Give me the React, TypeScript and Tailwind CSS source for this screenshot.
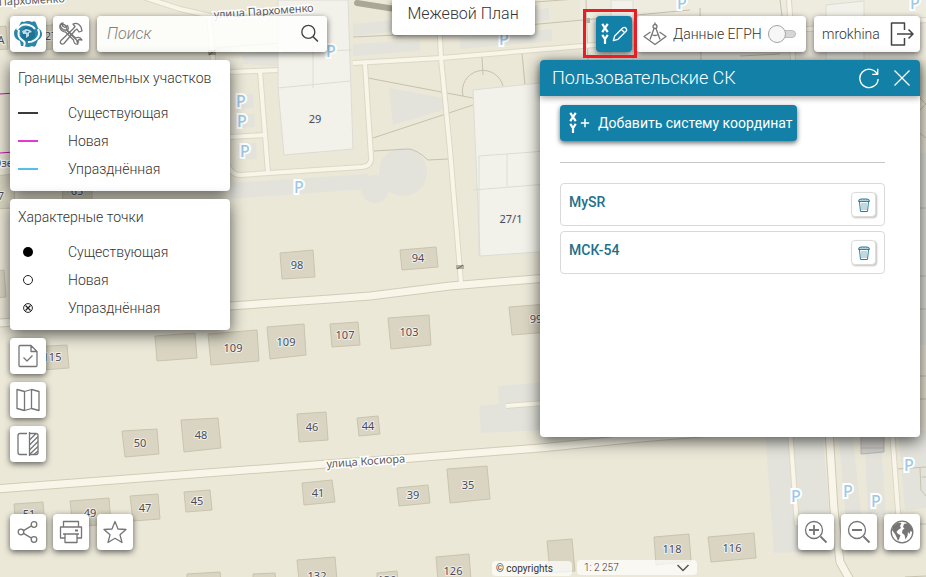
import { useState } from 'react'
import type { ReactNode } from 'react'

type Building = { points: string; label?: string; x?: number; y?: number }

const buildings: Building[] = [
  { points: '280,253 313,250 315,277 282,279', label: '98', x: 297, y: 269 },
  { points: '400,250 436,247 438,267 402,270', label: '94', x: 418, y: 262 },
  { points: '155,336 195,333 197,358 157,361' },
  { points: '208,334 257,330 259,361 211,365', label: '109', x: 233, y: 352 },
  { points: '267,327 304,324 306,355 270,359', label: '109', x: 286, y: 346 },
  { points: '330,324 358,322 360,345 332,347', label: '107', x: 345, y: 339 },
  { points: '388,318 429,315 431,345 391,349', label: '103', x: 409, y: 336 },
  { points: '509,307 560,303 562,331 512,335', label: '99', x: 536, y: 323 },
  { points: '30,347 67,345 69,368 30,371', label: '115', x: 52, y: 361 },
  { points: '122,431 157,429 159,454 125,457', label: '50', x: 140, y: 447 },
  { points: '181,420 218,418 221,448 184,452', label: '48', x: 201, y: 439 },
  { points: '297,414 326,412 328,440 299,442', label: '46', x: 312, y: 431 },
  { points: '357,418 378,416 380,434 359,436', label: '44', x: 368, y: 430 },
  { points: '14,504 43,502 45,528 16,530', label: '51', x: 29, y: 518 },
  { points: '70,501 109,498 111,524 73,527', label: '49', x: 90, y: 517 },
  { points: '130,496 158,494 160,519 133,521', label: '47', x: 145, y: 512 },
  { points: '184,492 210,490 212,510 186,512', label: '45', x: 197, y: 505 },
  { points: '302,483 332,480 335,502 304,505', label: '41', x: 318, y: 497 },
  { points: '397,488 428,485 430,503 399,506', label: '39', x: 413, y: 499 },
  { points: '447,469 487,466 490,499 450,503', label: '35', x: 468, y: 489 },
  { points: '187,574 220,572 221,580 187,580' },
  { points: '253,574 275,573 276,580 253,580' },
  { points: '297,560 335,557 337,580 299,580', label: '132', x: 317, y: 580 },
  { points: '377,573 397,571 398,580 377,580', label: '130', x: 387, y: 584 },
  { points: '436,557 469,554 471,580 438,580', label: '126', x: 453, y: 575 },
  { points: '547,541 572,539 575,571 550,573' },
  { points: '654,537 689,534 691,561 656,565', label: '118', x: 672, y: 553 },
  { points: '708,537 754,533 756,558 711,562', label: '116', x: 732, y: 552 },
  { points: '-5,27 6,26 8,49 -5,50', label: 'A', x: 1, y: 44 },
  { points: '40,26 64,24 66,48 42,50', label: '27', x: 51, y: 40 },
  { points: '-5,176 14,174 15,208 -5,209', label: '7', x: 1, y: 200 },
  { points: '62,170 92,168 92,210 63,210', label: '65', x: 77, y: 195 },
  { points: '-5,271 4,270 6,297 -5,298' },
]

const wideRoads = [
  'M0 323 L230 306 L330 299 L370 296 L410 291 L450 286 L560 277',
  'M-5 489 L340 463 L400 459 L540 448 L640 438 L760 428',
  'M829 430 L834 510 L840 562 L850 580',
]

const narrowRoads = [
  'M438 0 L441 58 L450 150 L461 283',
  'M230 72 L280 70',
  'M353 63 L441 58 L583 46 L926 20',
  'M260 71 L268 173',
  'M230 137 L265 135',
  'M226 160 Q230 175 240 175 L362 167 Q372 166 371 157 L365 64',
  'M140 -4 L180 9 L211 16 L280 10',
  'M209 16 L213 60',
  'M789 0 L793 60',
  'M790 430 L797 525',
  'M892 430 L899 525',
  'M506 406 L545 403',
]

const paths = [
  'M368 78 L473 98',
  'M373 138 L473 105',
  'M374 151 L408 149 Q416 149 428 160 L448 159',
  'M463 96 A20 20 0 0 1 503 86',
  'M482 57 L483 75',
  'M522 53 L525 85',
  'M353 37 L440 33 L583 20 L690 10',
  'M213 48 L280 43',
  'M535 2 L590 -2',
  'M897 469 L926 467 M920 468 L921 490 L926 496 M922 477 L926 477',
  'M586 0 L588 60 M700 8 L701 60 M740 56 L780 54 M780 0 L782 16',
  'M912 90 L926 104 L918 112 M918 132 L926 138',
  'M916 208 H926 M916 276 H926 M916 309 H926 M916 376 H926 M916 399 H926',
  'M898 524 H926 M905 577 L926 576',
]

const parkings = [
  [331, 57], [241, 107], [242, 127], [245, 157], [299, 193], [504, 45],
  [682, 9], [915, 9], [796, 502], [848, 497], [876, 507], [909, 471],
]

function CityMap() {
  return (
    <svg
      className="absolute inset-0 h-full w-full bg-[#ebe8d8]"
      viewBox="0 0 926 577"
      preserveAspectRatio="xMinYMin slice"
      fontFamily="'Noto Sans', 'Open Sans', sans-serif"
      fontSize="11"
      textAnchor="middle"
      aria-hidden="true"
    >
      <path d="M580 0 H926 V60 H580Z" fill="#eeebdf" />
      <g fill="#e3e3dc">
        <path d="M389 88 L443 98 V110 L393 125Z" />
        <circle cx="403" cy="172" r="24" />
        <circle cx="375" cy="189" r="14" />
        <path d="M230 183 L368 174 V189 L230 199Z" />
        <path d="M353 24 L391 20 V32 L353 36Z M353 44 L420 40 V51 L353 56Z M460 38 L552 29 V41 L460 49Z M490 15 L549 8 V20 L490 26Z" />
        <path d="M235 95 L253 94 L254 108 L235 109Z M235 115 L254 114 L255 127 L236 128Z M238 144 L256 143 L257 159 L239 160Z" />
        <path d="M242 55 L278 50 V66 L243 64Z" />
        <path d="M498 386 L550 382 V430 L481 433 L479 406 L499 404Z" />
        <path d="M765 430 H822 L833 551 L774 553Z M838 430 H852 L862 520 H846Z M864 430 H880 L886 515 H868Z M898 430 H926 V508 L905 510Z" />
        <path d="M914 153 H926 V345 H914Z" />
      </g>
      <g fill="none" stroke="#c6c2ad" strokeWidth="1">
        {paths.map((d) => <path key={d} d={d} />)}
      </g>
      <g fill="none" strokeLinejoin="round">
        {narrowRoads.map((d) => <path key={d} d={d} stroke="#dcd8c6" strokeWidth="6" />)}
        {wideRoads.map((d) => <path key={d} d={d} stroke="#d0ccb7" strokeWidth="9" />)}
        {narrowRoads.map((d) => <path key={d} d={d} stroke="#f9f6e9" strokeWidth="4" />)}
        {wideRoads.map((d) => <path key={d} d={d} stroke="#f9f6e9" strokeWidth="7" />)}
        <path d="M357 3 L395 9" stroke="#aaa894" strokeWidth="6" strokeLinecap="round" />
        <path d="M0 94 L14 93 M0 153 L14 152" stroke="#c217b0" />
      </g>

      <g fill="#f3f2ea" stroke="#dcdcd6">
        <path d="M278 0 H348 L353 149 L284 155 L278 88Z" />
        <path d="M278 88 L350 81 M313 88 V40 M283 52 L352 50" fill="none" />
        <path d="M473 90 L540 83 L640 75 V245 L480 256Z" />
        <path d="M479 156 L560 150 M507 154 V186 M473 190 L560 183 M479 156 V256" fill="none" />
        <path d="M611 0 H633 V60 H611Z M826 5 L864 1 V60 H826Z" />
      </g>

      <g stroke="#c8c4ae" fill="#d9d5c2">
        {buildings.map((b) => <polygon key={b.points} points={b.points} />)}
        <path d="M861 430 H884 V452 L861 454Z M861 448 H884" fill="#cfceca" stroke="#b5b5b3" />
      </g>
      <path d="M208 50 h8 v5 h-8z M456 265 h8 v4 h-8z M583 18 h7 v5 h-7z" fill="#b3b09e" />
      <path d="M209 55 l6 -5 M457 269 l6 -4" stroke="#66645a" />

      <g fill="#4a4c5c" stroke="#f1efe6" strokeWidth="2" paintOrder="stroke">
        {buildings.map((b) => b.label && <text key={b.points} x={b.x} y={b.y}>{b.label}</text>)}
        <text x="315" y="123">29</text>
        <text x="511" y="223">27/1</text>
      </g>
      <g fill="#5c5a5a" stroke="#ffffff" strokeWidth="3" paintOrder="stroke">
        <text x="264" y="15" transform="rotate(-4 264 15)">улица Пархоменко</text>
        <text x="32" y="4" transform="rotate(-3 32 4)">Пархоменко</text>
        <text x="366" y="465" transform="rotate(-4 366 465)">улица Косиора</text>
        <text x="3" y="167">Озе</text>
      </g>
      <g fill="#9dcae6" stroke="#ffffff" strokeWidth="4" paintOrder="stroke" fontSize="16" fontWeight="500">
        {parkings.map(([x, y]) => <text key={`${x}-${y}`} x={x} y={y}>P</text>)}
      </g>
    </svg>
  )
}

function Icon({ children, className = 'size-6' }: { children: ReactNode; className?: string }) {
  return (
    <svg
      viewBox="0 0 24 24"
      className={className}
      fill="none"
      stroke="currentColor"
      strokeWidth="1.3"
      strokeLinejoin="round"
      aria-hidden="true"
    >
      {children}
    </svg>
  )
}

function MapButton({ label, children }: { label: string; children: ReactNode }) {
  return (
    <button
      type="button"
      aria-label={label}
      className="flex size-9 shrink-0 items-center justify-center rounded bg-white text-[#757575] shadow-[0_2px_6px_rgba(0,0,0,0.6)]"
    >
      {children}
    </button>
  )
}

function AxesMark({ className }: { className: string }) {
  return (
    <svg viewBox="0 0 10 24" className={className} fill="none" stroke="currentColor" strokeWidth="2.4" aria-hidden="true">
      <path d="M2 1 L8 10 M8 1 L2 10" />
      <path d="M2 13 L5 17.5 L8 13 M5 17 V23" />
    </svg>
  )
}

function Logo() {
  return (
    <svg viewBox="0 0 28 28" className="size-7" aria-hidden="true">
      <path
        d="M7 2 Q8 1 10 2 Q14 0 18 2 Q21 0 22 3 L24 8 Q28 10 28 14 Q28 18 24 20 L22 25 Q21 28 18 26 Q14 28 10 26 L7 26 L6 21 Q0 19 0 13 Q0 9 4 8Z"
        fill="#2a87a9"
      />
      <g fill="none" stroke="#ffffff" strokeWidth="2">
        <path d="M3 10 Q7 3 15 5 Q19 6 21 9" />
        <path d="M24 9 Q27 16 21 20 Q18 22 14 22" />
        <path d="M10 26 Q12 22 8 20 Q3 17 5 10" />
      </g>
      <circle cx="14" cy="14" r="7" fill="#1c7395" />
      <path d="M8 11 L12 9 L16 10 L18 12 L15 13 L15 16 L12 18 L12 14 L9 14Z" fill="#b9dbe6" />
      <path d="M12 11 L15 11 L13 13Z" fill="#1c7395" />
    </svg>
  )
}

type LegendRow = { label: string; symbol: ReactNode }

function LegendCard({ title, rows }: { title: string; rows: LegendRow[] }) {
  return (
    <section className="w-[220px] rounded bg-white px-2 py-2 text-[#333] shadow-[0_4px_16px_rgba(0,0,0,0.65)]">
      <h2 className="mb-[11px] text-sm leading-5 font-light">{title}</h2>
      <ul>
        {rows.map((row) => (
          <li key={row.label} className="flex h-7 items-center">
            <span className="flex w-[50px] items-center">{row.symbol}</span>
            <span className="text-sm leading-5 font-light">{row.label}</span>
          </li>
        ))}
      </ul>
    </section>
  )
}

const borderRows: LegendRow[] = [
  { label: 'Существующая', symbol: <i className="h-0.5 w-5 bg-[#3a3a3a]" /> },
  { label: 'Новая', symbol: <i className="h-0.5 w-5 bg-[#e23bd3]" /> },
  { label: 'Упразднённая', symbol: <i className="h-0.5 w-5 bg-[#55bfea]" /> },
]

const pointRows: LegendRow[] = [
  { label: 'Существующая', symbol: <i className="ml-[5px] size-2.5 rounded-full bg-black" /> },
  { label: 'Новая', symbol: <i className="ml-[5px] size-2.5 rounded-full border border-[#222]" /> },
  {
    label: 'Упразднённая',
    symbol: (
      <svg viewBox="0 0 10 10" className="ml-[5px] size-2.5" fill="none" stroke="#222" aria-hidden="true">
        <circle cx="5" cy="5" r="4.4" />
        <path d="M2.5 2.5 L7.5 7.5 M7.5 2.5 L2.5 7.5" strokeWidth="1.3" />
      </svg>
    ),
  },
]

function Header() {
  const [query, setQuery] = useState('')
  const [egrn, setEgrn] = useState(false)

  return (
    <header className="grid grid-cols-[1fr_auto_1fr] items-start text-[#333]">
      <div className="flex gap-[7px] pt-4 pl-2.5">
        <MapButton label="Главная"><Logo /></MapButton>
        <MapButton label="Инструменты">
          <Icon>
            <path d="M2 2 L6 3 L8 6 L7.5 8 L20 20.5 M2 2 L1.5 5 L4.5 8 L7 8" />
            <path d="M1 6 Q0 2 4 1 L3.5 4 L6 5.5 L8.5 3.5 Q10 6 8.5 8.5 L16.5 16 Q21 14 23 18 L20 17.5 L18 19.5 L19 22 Q15 23 14.5 18 L6.5 10 Q3 10 1 6Z" />
            <path d="M14 2 Q19 0 22 5 L23 9 L20 10 L18 7 L16 8.5 L5 21.5 Q3 23 1.5 21 Q1 20 2 18.5 L14 7 L16 4.5Z" />
          </Icon>
        </MapButton>
        <form
          role="search"
          onSubmit={(event) => event.preventDefault()}
          className="ml-px flex h-9 w-[230px] items-center rounded bg-white/85 pr-[7px] pl-2.5 shadow-[0_2px_6px_rgba(0,0,0,0.6)]"
        >
          <input
            type="text"
            aria-label="Поиск"
            placeholder="Поиск"
            value={query}
            onChange={(event) => setQuery(event.target.value)}
            className="min-w-0 flex-1 bg-transparent text-base font-light outline-none placeholder:text-[#808080] placeholder:italic"
          />
          <button type="submit" aria-label="Найти" className="text-[#444]">
            <Icon className="size-5">
              <circle cx="10" cy="9.5" r="7.8" strokeWidth="1.6" />
              <path d="M15.5 15 L21.500 21" strokeWidth="2" />
            </Icon>
          </button>
        </form>
      </div>

      <h1 className="flex h-[35px] w-[143px] justify-center rounded-b bg-white pt-0.5 text-base leading-6 font-light shadow-[0_2px_6px_rgba(0,0,0,0.6)]">
        Межевой План
      </h1>

      <div className="flex justify-end gap-2 pt-4 pr-1.5">
        <div className="flex gap-1">
          <div className="relative">
            <button
              type="button"
              aria-label="Пользовательские СК"
              className="flex size-9 items-center justify-center gap-0.5 rounded bg-[#1381a7] text-white shadow-[0_2px_6px_rgba(0,0,0,0.6)]"
            >
              <AxesMark className="h-[22px] w-2.5" />
              <Icon className="size-4">
                <path d="M2 22 L4 15 L16 3 Q18.500 1 21 3.500 Q23 6 21 8 L9 20Z M14 5 L19 10" strokeWidth="2" />
              </Icon>
            </button>
            <span className="pointer-events-none absolute -top-[7px] -right-[5px] -bottom-[6px] -left-[13px] border-3 border-[#ec1c24]" />
          </div>
          <label className="flex h-9 w-[170px] items-center rounded bg-white pr-2.5 pl-[7px] text-sm font-light shadow-[0_2px_6px_rgba(0,0,0,0.6)]">
            <Icon className="mr-1.5 size-6 text-[#757575]">
              <circle cx="12" cy="4.5" r="2" />
              <path d="M12 0.500 V2.500 M11 6.500 L7 17.500 M13 6.500 L17 17.500 M8.500 12.500 Q12 14.500 15.500 12.500" />
              <path d="M7.500 10 L1 14.500 L12 22.500 L23 14.500 L16.500 10" />
            </Icon>
            <span className="flex-1 whitespace-nowrap">Данные ЕГРН</span>
            <input
              type="checkbox"
              checked={egrn}
              onChange={(event) => setEgrn(event.target.checked)}
              className="relative h-2 w-7 appearance-none rounded-full border border-[#bdbdbd] bg-[#d6d6d6] before:absolute before:-top-1.5 before:-left-px before:size-[18px] before:rounded-full before:border before:border-[#a5a5a5] before:bg-[#f7f7f7] checked:before:left-2.5"
            />
          </label>
        </div>
        <button
          type="button"
          className="flex h-9 w-[106px] items-center justify-between rounded bg-white pr-1.5 pl-2 text-sm font-light shadow-[0_2px_6px_rgba(0,0,0,0.6)]"
        >
          mrokhina
          <Icon className="size-6 text-[#444]">
            <path d="M14.500 8 V1 H1.500 V23 H14.500 V16" strokeWidth="1.5" />
            <path d="M7 12 H23 M18.500 7.500 L23 12 L18.500 16.500" strokeWidth="1.5" />
          </Icon>
        </button>
      </div>
    </header>
  )
}

function CoordinateSystemsPanel() {
  const [systems, setSystems] = useState(['MySR', 'МСК-54'])

  return (
    <section className="min-h-[377px] w-[380px] self-start rounded bg-white shadow-[0_4px_16px_rgba(0,0,0,0.65)]">
      <div className="flex h-9 items-center rounded-t bg-[#1381a7] pr-2 pl-3 text-white shadow-[0_2px_6px_rgba(0,0,0,0.35)]">
        <h2 className="flex-1 text-lg leading-6 font-light">Пользовательские СК</h2>
        <button type="button" aria-label="Обновить" className="mr-3">
          <Icon className="size-[22px]">
            <path d="M21 8 A10 10 0 1 0 22 13 M21.500 2 V8 H15.500" strokeWidth="1.5" />
          </Icon>
        </button>
        <button type="button" aria-label="Закрыть">
          <Icon className="size-5">
            <path d="M3 3 L21 21 M21 3 L3 21" strokeWidth="1.5" />
          </Icon>
        </button>
      </div>

      <div className="pt-[9px] pr-[35px] pl-5">
        <button
          type="button"
          className="flex h-9 items-center rounded bg-[#1381a7] pr-1 pl-2 text-sm whitespace-nowrap text-white shadow-[0_2px_5px_rgba(0,0,0,0.6)]"
        >
          <AxesMark className="h-[22px] w-2.5" />
          <Icon className="mr-2 ml-0.5 size-2.5">
            <path d="M12 2 V22 M2 12 H22" strokeWidth="3.500" />
          </Icon>
          Добавить систему координат
        </button>
        <hr className="mt-[21px] mb-5 border-[#c8c8c8]" />
        <ul className="space-y-[5px]">
          {systems.map((name) => (
            <li key={name} className="flex h-[43px] items-start rounded border border-[#d9d9d9] pt-2 pr-2 pl-2">
              <span className="flex-1 text-sm leading-5 font-medium text-[#226f8b]">{name}</span>
              <button
                type="button"
                aria-label={`Удалить ${name}`}
                onClick={() => setSystems(systems.filter((item) => item !== name))}
                className="flex size-[25px] items-center justify-center rounded border border-[#dcdcdc] bg-white text-[#2b7f9d] shadow-[1px_1px_2px_rgba(0,0,0,0.25)]"
              >
                <svg viewBox="0 0 12 14" className="h-3.5 w-3" fill="none" stroke="currentColor" aria-hidden="true">
                  <path d="M0.500 3.500 Q0.500 1 3 1 H9 Q11.500 1 11.500 3.500Z" fill="#b5d3df" />
                  <path d="M1.500 4 L2.500 13.500 H9.500 L10.500 4" />
                  <path d="M4 5 V12 M6 5 V12 M8 5 V12" stroke="#7fb0c3" />
                </svg>
              </button>
            </li>
          ))}
        </ul>
      </div>
    </section>
  )
}

function Footer() {
  return (
    <footer className="flex items-end">
      <div className="flex flex-1 gap-[7px] pb-[27px] pl-2.5">
        <MapButton label="Поделиться">
          <Icon>
            <circle cx="5" cy="12" r="2.800" />
            <circle cx="18" cy="4.500" r="2.800" />
            <circle cx="18" cy="19.500" r="2.800" />
            <path d="M7.500 10.600 L15.500 5.900 M7.500 13.400 L15.500 18.100" />
          </Icon>
        </MapButton>
        <MapButton label="Печать">
          <Icon>
            <path d="M4.500 7 V1.500 H19.500 V7 M6 18 H1.500 V7 H22.500 V18 H18 M4 14 H20 M6 14 V22.500 H18 V14" />
            <path d="M16 10.500 H19" strokeWidth="2" />
          </Icon>
        </MapButton>
        <div className="pl-px">
          <MapButton label="Избранное">
            <Icon>
              <path d="M12 1.500 L15 9 L23 9.500 L17 14.800 L19 22.500 L12 18.300 L5 22.500 L7 14.800 L1 9.500 L9 9Z" />
            </Icon>
          </MapButton>
        </div>
      </div>

      <div className="mr-[101px] flex items-end gap-[5px] pb-px text-[10px] leading-[15px] text-[#333]">
        <a href="#copyrights" className="h-[15px] w-20 rounded-sm bg-white/70 pl-1">© copyrights</a>
        <div className="relative mb-px flex h-[15px] w-[120px] rounded-sm bg-white/70">
          <select aria-label="Масштаб" className="w-full appearance-none bg-transparent pl-[7px] leading-[15px] font-light outline-none">
            <option>1: 2 257</option>
          </select>
          <Icon className="pointer-events-none absolute top-0.5 right-2 size-3 text-[#555]">
            <path d="M1 6 L12 17 L23 6" strokeWidth="3" />
          </Icon>
        </div>
      </div>

      <div className="flex gap-[7px] pr-1.5 pb-[27px]">
        <MapButton label="Приблизить">
          <Icon>
            <circle cx="10" cy="10" r="8.500" />
            <path d="M5 10 H15 M10 5 V15 M16.500 16.500 L22.500 22.500" strokeWidth="1.800" />
          </Icon>
        </MapButton>
        <MapButton label="Отдалить">
          <Icon>
            <circle cx="10" cy="10" r="8.500" />
            <path d="M5 10 H15 M16.500 16.500 L22.500 22.500" strokeWidth="1.800" />
          </Icon>
        </MapButton>
        <MapButton label="Вся карта">
          <Icon>
            <circle cx="12" cy="12" r="10.800" />
            <g fill="currentColor" stroke="none">
              <path d="M3 6 L8 2.500 L11.500 3 L10 6 L11 8 L8 10 L6.500 12 L8 14 L10.500 15 L9.500 18 L8 21 L6.500 17 L5 14 L2 10Z" />
              <path d="M14 4 L18 3 L22 8 L22.500 12 L20.500 11 L19.500 14 L18 12 L17.500 16 L15.500 19.500 L14.500 15 L12 13 L12.500 10 L14.500 8.500 L13 7Z" />
            </g>
          </Icon>
        </MapButton>
      </div>
    </footer>
  )
}

export default function App() {
  return (
    <div className="relative isolate flex min-h-screen flex-col overflow-hidden font-[Roboto,'Open_Sans',sans-serif]">
      <div className="absolute inset-0 -z-10"><CityMap /></div>
      <Header />
      <main className="flex flex-1 items-start justify-between pt-2 pr-1.5 pl-2.5">
        <div className="flex flex-col gap-2">
          <LegendCard title="Границы земельных участков" rows={borderRows} />
          <LegendCard title="Характерные точки" rows={pointRows} />
          <MapButton label="Проверка">
            <Icon>
              <path d="M15 1.500 H4 Q3 1.500 3 2.500 V21.500 Q3 22.500 4 22.500 H20 Q21 22.500 21 21.500 V7.500Z M15 1.500 V7.500 H21 M7.500 13.500 L11 17 L16.500 11.500" />
            </Icon>
          </MapButton>
          <MapButton label="Карты">
            <Icon>
              <path d="M1 1.500 L8.500 3.500 L15.500 1.500 L23 3.500 V22.500 L15.500 20.500 L8.500 22.500 L1 20.500Z M8.500 3.500 V22.500 M15.500 1.500 V20.500" />
            </Icon>
          </MapButton>
          <MapButton label="Сравнение">
            <Icon>
              <path d="M11 1.500 H4 Q2 1.500 2 3.500 V20.500 Q2 22.500 4 22.500 H11 M13.500 0 V24 M13.500 1.500 H20 Q22 1.500 22 3.500 V20.500 Q22 22.500 20 22.500 H13.500" />
              <path d="M13.500 8 L20 1.500 M13.500 13 L22 4.500 M13.500 18 L22 9.500 M14 22 L22 14.500 M18 22.500 L22 19" />
            </Icon>
          </MapButton>
        </div>
        <CoordinateSystemsPanel />
      </main>
      <Footer />
    </div>
  )
}
